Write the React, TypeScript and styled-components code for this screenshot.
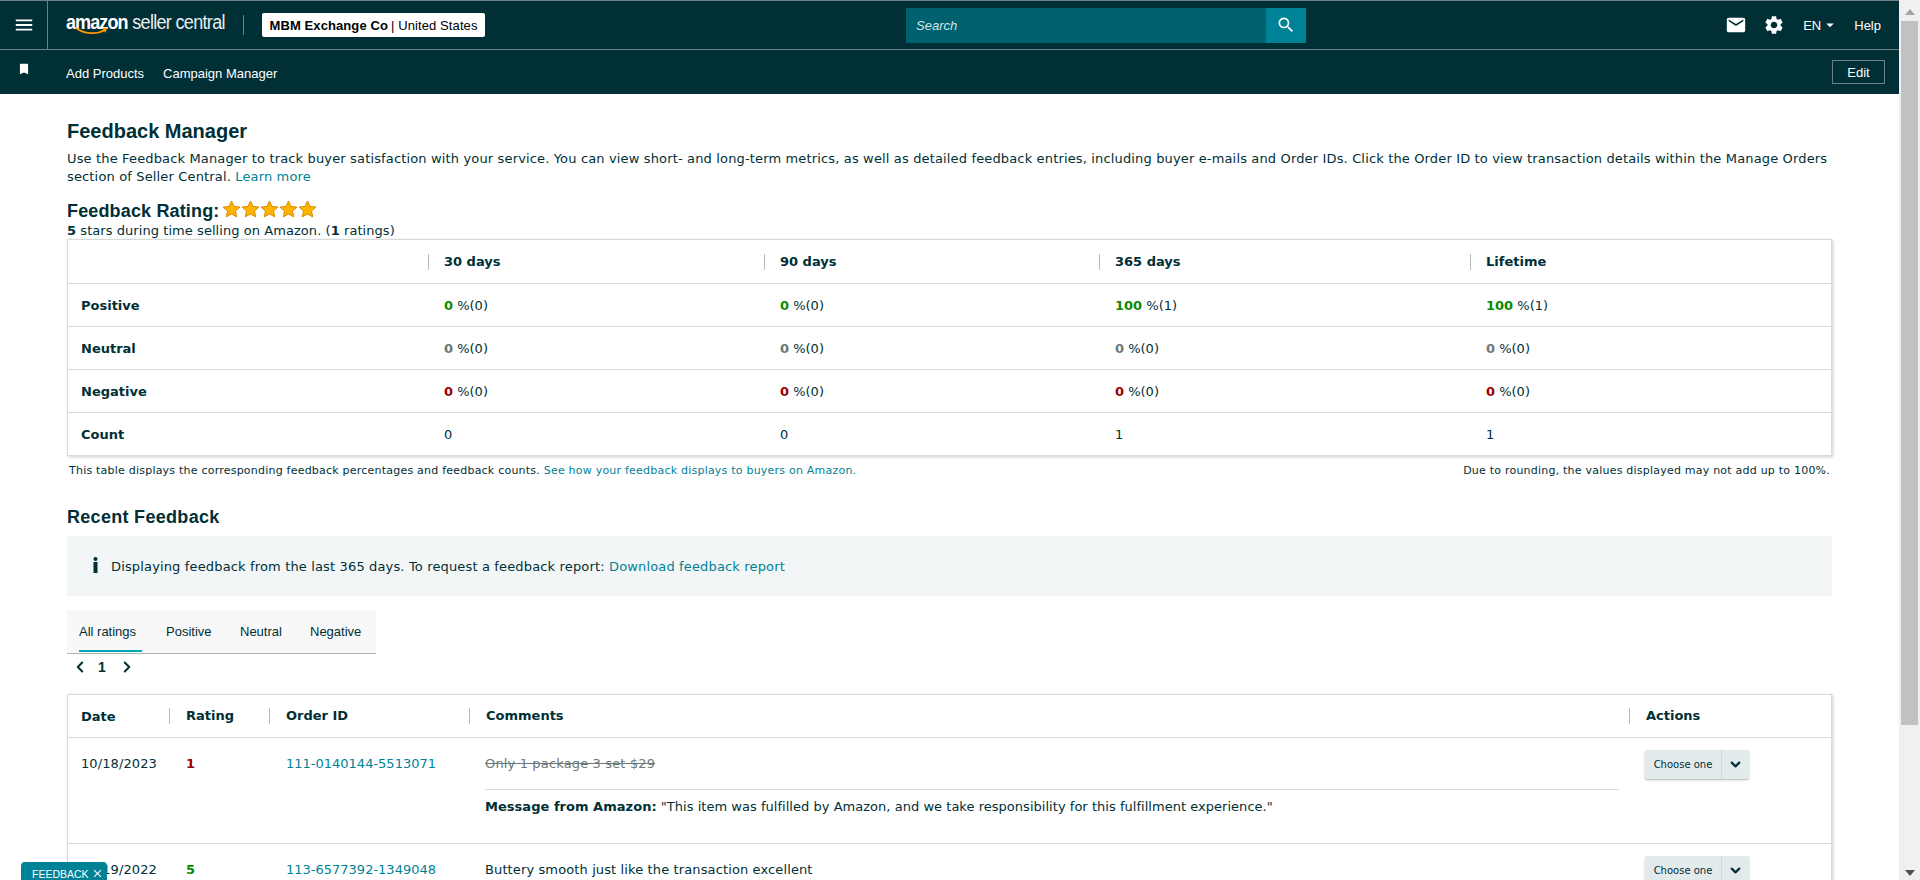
import React from "react";
import styled, { createGlobalStyle } from "styled-components";
import { MdMenu, MdEmail, MdSettings, MdSearch, MdBookmark, MdClose, MdArrowDropDown } from "react-icons/md";
import { ChevronLeft, ChevronRight, ChevronDown } from "lucide-react";

const Global = createGlobalStyle`
  html, body { margin: 0; padding: 0; height: 880px; overflow: hidden; background: #fff; }
  * { box-sizing: border-box; }
  body { font-family: "DejaVu Sans", Verdana, sans-serif; font-size: 11px; color: #002f36; }
`;
const Page = styled.div`display: flex; height: 880px; width: 1920px; overflow: hidden; position: relative;`;
const Main = styled.main`width: 1899px; height: 880px; overflow: hidden; flex: none;`;
const ScrollBar = styled.aside`width: 21px; height: 880px; background: #f0f0f0; display: flex; flex-direction: column; align-items: center; justify-content: space-between; padding: 9px 0 4px;`;
const ScrollThumb = styled.div`width: 17px; height: 704px; background: #c1c1c1; margin: 6px 0 auto 0;`;
const Arrow = styled.div<{ $up?: boolean }>`
  width: 0; height: 0; border-left: 5px solid transparent; border-right: 5px solid transparent;
  ${(p) => (p.$up ? "border-bottom: 6px solid #a3a3a3;" : "border-top: 6px solid #505050;")}
`;
const TopBar = styled.header`height: 50px; background: #002f36; border-top: 1px solid #6c8287; border-bottom: 1px solid #6c8287; display: flex; align-items: center; color: #fff;`;
const MenuCell = styled.div`width: 48px; height: 48px; border-right: 1px solid #6c8287; display: flex; align-items: center; justify-content: center; font-size: 22px;`;
const Logo = styled.div`position: relative; margin-left: 18px; width: 160px; height: 30px; white-space: nowrap; font-family: "Liberation Sans", Arial, sans-serif; line-height: 24px;`;
const LogoWords = styled.div`display: flex; gap: 5px; transform: scaleX(0.925); transform-origin: left center;`;
const LogoAmazon = styled.span`font-size: 19.5px; font-weight: 700; letter-spacing: -1px;`;
const LogoCentral = styled.span`font-size: 19.5px; font-weight: 400; letter-spacing: -0.75px; color: #e8eded;`;
const LogoSmile = styled.svg`position: absolute; left: 9px; top: 17px;`;
const VSep = styled.div`width: 1px; height: 20px; background: #6c8287; margin-left: 17px;`;
const Badge = styled.div`margin-left: 18px; width: 223px; height: 24px; background: #fff; border-radius: 2px; color: #000; font-family: "Liberation Sans", Arial, sans-serif; font-size: 13px; display: flex; align-items: center; justify-content: center; white-space: nowrap; letter-spacing: 0.1px; b { font-weight: 700; } span { margin-left: 3px; }`;
const SearchWrap = styled.div`margin-left: 421px; display: flex; height: 35px; width: 400px;`;
const SearchField = styled.div`flex: 1; background: #00616e; color: #d5e3e6; font: italic 13px "Liberation Sans", Arial, sans-serif; display: flex; align-items: center; padding-left: 10px;`;
const SearchBtn = styled.div`width: 40px; background: #008296; display: flex; align-items: center; justify-content: center; font-size: 20px;`;
const TopRight = styled.div`margin-left: auto; display: flex; align-items: center; padding-right: 18px; font: 13px "Liberation Sans", Arial, sans-serif;`;
const TopIcon = styled.span<{ $ml: number }>`display: flex; font-size: 22px; margin-left: ${(p) => p.$ml}px;`;
const Lang = styled.span`display: flex; align-items: center; margin-left: 18px;`;
const Help = styled.span`margin-left: 15px;`;
const SubBar = styled.nav`height: 44px; background: #002f36; display: flex; align-items: center; color: #fff; font: 13px "Liberation Sans", Arial, sans-serif; padding-right: 14px;`;
const BookmarkCell = styled.span`width: 48px; display: flex; justify-content: center; font-size: 14px; margin-top: -6px;`;
const SubLink = styled.span<{ $ml: number }>`margin-left: ${(p) => p.$ml}px; margin-top: 2px;`;
const EditBtn = styled.span`margin-left: auto; width: 53px; height: 24px; border: 1px solid #6c8287; display: flex; align-items: center; justify-content: center;`;

const Content = styled.div`padding: 25px 67px 0 67px;`;
const Title = styled.h1`margin: 0; font: 700 20px/24px "Liberation Sans", Arial, sans-serif;`;
const Para = styled.p`margin: 7px 0 0; font-size: 13px; line-height: 18px; letter-spacing: 0.15px;`;
const Link = styled.a`color: #008296; text-decoration: none;`;
const RatingHead = styled.div`margin-top: 13px; display: flex; align-items: center; gap: 3px; height: 24px;`;
const SubTitle = styled.h2`margin: 0; font: 700 18px/24px "Liberation Sans", Arial, sans-serif; letter-spacing: 0.15px;`;
const Stars = styled.span`display: flex; margin-top: -4px;`;
const Small = styled.div`font-size: 13px; line-height: 14px; margin-top: 1px; letter-spacing: 0.06px;`;
const Card = styled.div`margin-top: 1px; border: 1px solid #d5dbdb; box-shadow: 1px 1px 3px rgba(0,0,0,.2); background: #fff;`;
const StatRow = styled.div<{ $head?: boolean }>`display: grid; grid-template-columns: 360px 336px 335px 371px 1fr; height: 43px; align-items: center; font-size: 13px; ${(p) => !p.$head && "border-top: 1px solid #d5dbdb;"}`;
const RowLabel = styled.div`padding-left: 13px; font-weight: 700; font-size: 13px;`;
const HeadCell = styled.div`font-weight: 700; font-size: 13px; border-left: 1px solid #b3bcbc; line-height: 16px; padding-left: 15px; white-space: nowrap;`;
const EmptyHead = styled.div``;
const StatCell = styled.div`padding-left: 16px;`;
const Num = styled.b<{ $c: string }>`color: ${(p) => p.$c};`;
const NoteRow = styled.div`display: flex; justify-content: space-between; font-size: 11px; line-height: 14px; padding: 8px 2px 0; letter-spacing: 0.22px;`;
const RecentTitle = styled(SubTitle)`margin-top: 27px; letter-spacing: 0.3px;`;
const InfoBox = styled.div`margin-top: 7px; height: 60px; background: #f3f6f6; display: flex; align-items: center; padding-left: 26px; font-size: 13px; letter-spacing: 0.15px;`;
const InfoI = styled.svg`margin-right: 13px; margin-top: -3px;`;
const Tabs = styled.div`margin-top: 14px; width: 309px; height: 44px; background: #f8f8f8; border-bottom: 1px solid #aab7b8; display: flex; font: 13px "Liberation Sans", Arial, sans-serif; padding-left: 12px;`;
const Tab = styled.div<{ $w: number; $on?: boolean }>`width: ${(p) => p.$w}px; position: relative; line-height: 43px; ${(p) => p.$on && `&::after { content: ""; position: absolute; left: 0; bottom: 1px; width: 63px; height: 2px; background: #00a8b8; }`}`;
const Pager = styled.div`height: 24px; display: flex; align-items: center; padding: 2px 0 0 4px; font: 700 14px "Liberation Sans", Arial, sans-serif;`;
const PagerNum = styled.span`margin: 0 12px 0 9px;`;
const FeedTable = styled(Card)`margin-top: 16px;`;
const FeedRow = styled.div<{ $head?: boolean }>`display: grid; grid-template-columns: 101px 100px 200px 1160px 1fr; font-size: 13px; ${(p) => p.$head ? "height: 42px; align-items: center;" : "border-top: 1px solid #d5dbdb; height: 106px; align-content: start;"}`;
const FeedDate = styled.div`padding: 17px 0 0 13px; line-height: 18px; white-space: nowrap; letter-spacing: 0.1px;`;
const FeedFirstHead = styled.div`padding-left: 13px; font-weight: 700;`;
const FeedHead = styled(HeadCell)`padding-left: 16px;`;
const FeedCell = styled.div`padding: 17px 0 0 17px; line-height: 18px; white-space: nowrap;`;
const Comment = styled.div`padding: 17px 0 0 16px; line-height: 18px; letter-spacing: 0.03px;`;
const Struck = styled.div`text-decoration: line-through; color: #6c7778; letter-spacing: 0.15px;`;
const PlainComment = styled.span`letter-spacing: 0.12px;`;
const Rule = styled.div`height: 1px; background: #d5dbdb; margin: 16px 10px 8px 0;`;
const ActionCell = styled.div`padding: 12px 0 0 16px;`;
const Choose = styled.div`width: 104px; height: 29px; background: #e3eaeb; border-radius: 2px; box-shadow: 0 1px 2px rgba(0,0,0,.3); display: flex;`;
const ChooseLabel = styled.span`width: 77px; display: flex; align-items: center; justify-content: center; border-right: 1px solid #cfd8d9; font: 10px "DejaVu Sans", sans-serif;`;
const ChooseArrow = styled.span`flex: 1; display: flex; align-items: center; justify-content: center;`;
const FeedbackTab = styled.div`position: absolute; left: 21px; top: 862px; width: 86px; height: 18px; background: #008296; border-radius: 4px 4px 0 0; color: #fff; font: 10.5px "Liberation Sans", Arial, sans-serif; display: flex; align-items: center; padding: 5px 0 0 11px; gap: 2px;`;

const Star = () => (
  <svg width="19" height="18" viewBox="0 0 19 18">
    <path d="M9.5 1l2.5 5.4 5.9.7-4.4 4 1.2 5.8-5.2-3-5.2 3 1.2-5.8-4.4-4 5.9-.7z" fill="#ffb400" stroke="#d98a00" strokeWidth="1" />
  </svg>
);

const pct = (n: number | string, c: string, k: number | string) => (<><Num $c={c}>{n}</Num> %({k})</>);
const GREEN = "#0a8a00", RED = "#a00000", GREY = "#6c7778";

const Choice = () => (
  <Choose><ChooseLabel>Choose one</ChooseLabel><ChooseArrow><ChevronDown size={15} strokeWidth={3.5} /></ChooseArrow></Choose>
);

export default function App() {
  return (
    <Page>
      <Global />
      <Main>
        <TopBar>
          <MenuCell><MdMenu /></MenuCell>
          <Logo>
            <LogoWords><LogoAmazon>amazon</LogoAmazon><LogoCentral>seller central</LogoCentral></LogoWords>
            <LogoSmile width="34" height="10" viewBox="0 0 34 10">
              <path d="M1 1c8 6 20 7 29 2" fill="none" stroke="#f90" strokeWidth="1.8" />
              <path d="M27 1l5 0-1.5 5z" fill="#f90" />
            </LogoSmile>
          </Logo>
          <VSep />
          <Badge><b>MBM Exchange Co</b><span>| United States</span></Badge>
          <SearchWrap>
            <SearchField>Search</SearchField>
            <SearchBtn><MdSearch /></SearchBtn>
          </SearchWrap>
          <TopRight>
            <TopIcon $ml={0}><MdEmail /></TopIcon>
            <TopIcon $ml={16}><MdSettings /></TopIcon>
            <Lang>EN<MdArrowDropDown size={18} /></Lang>
            <Help>Help</Help>
          </TopRight>
        </TopBar>
        <SubBar>
          <BookmarkCell><MdBookmark /></BookmarkCell>
          <SubLink $ml={18}>Add Products</SubLink>
          <SubLink $ml={19}>Campaign Manager</SubLink>
          <EditBtn>Edit</EditBtn>
        </SubBar>
        <Content>
          <Title>Feedback Manager</Title>
          <Para>Use the Feedback Manager to track buyer satisfaction with your service. You can view short- and long-term metrics, as well as detailed feedback entries, including buyer e-mails and Order IDs. Click the Order ID to view transaction details within the Manage Orders section of Seller Central. <Link>Learn more</Link></Para>
          <RatingHead>
            <SubTitle>Feedback Rating:</SubTitle>
            <Stars><Star /><Star /><Star /><Star /><Star /></Stars>
          </RatingHead>
          <Small><b>5</b> stars during time selling on Amazon. (<b>1</b> ratings)</Small>
          <Card>
            <StatRow $head>
              <EmptyHead />
              <HeadCell>30 days</HeadCell><HeadCell>90 days</HeadCell><HeadCell>365 days</HeadCell><HeadCell>Lifetime</HeadCell>
            </StatRow>
            <StatRow>
              <RowLabel>Positive</RowLabel>
              <StatCell>{pct(0, GREEN, 0)}</StatCell><StatCell>{pct(0, GREEN, 0)}</StatCell><StatCell>{pct(100, GREEN, 1)}</StatCell><StatCell>{pct(100, GREEN, 1)}</StatCell>
            </StatRow>
            <StatRow>
              <RowLabel>Neutral</RowLabel>
              <StatCell>{pct(0, GREY, 0)}</StatCell><StatCell>{pct(0, GREY, 0)}</StatCell><StatCell>{pct(0, GREY, 0)}</StatCell><StatCell>{pct(0, GREY, 0)}</StatCell>
            </StatRow>
            <StatRow>
              <RowLabel>Negative</RowLabel>
              <StatCell>{pct(0, RED, 0)}</StatCell><StatCell>{pct(0, RED, 0)}</StatCell><StatCell>{pct(0, RED, 0)}</StatCell><StatCell>{pct(0, RED, 0)}</StatCell>
            </StatRow>
            <StatRow>
              <RowLabel>Count</RowLabel>
              <StatCell>0</StatCell><StatCell>0</StatCell><StatCell>1</StatCell><StatCell>1</StatCell>
            </StatRow>
          </Card>
          <NoteRow>
            <span>This table displays the corresponding feedback percentages and feedback counts. <Link>See how your feedback displays to buyers on Amazon.</Link></span>
            <span>Due to rounding, the values displayed may not add up to 100%.</span>
          </NoteRow>
          <RecentTitle>Recent Feedback</RecentTitle>
          <InfoBox>
            <InfoI width="5" height="16" viewBox="0 0 5 16"><circle cx="2.5" cy="2" r="2" fill="#002f36" /><rect x="0.5" y="5" width="4" height="11" fill="#002f36" /></InfoI>
            <span>Displaying feedback from the last 365 days. To request a feedback report: <Link>Download feedback report</Link></span>
          </InfoBox>
          <Tabs>
            <Tab $w={87} $on>All ratings</Tab><Tab $w={74}>Positive</Tab><Tab $w={70}>Neutral</Tab><Tab $w={60}>Negative</Tab>
          </Tabs>
          <Pager><ChevronLeft size={18} strokeWidth={2.6} /><PagerNum>1</PagerNum><ChevronRight size={18} strokeWidth={2.6} /></Pager>
          <FeedTable>
            <FeedRow $head>
              <FeedFirstHead>Date</FeedFirstHead>
              <FeedHead>Rating</FeedHead><FeedHead>Order ID</FeedHead><FeedHead>Comments</FeedHead><FeedHead>Actions</FeedHead>
            </FeedRow>
            <FeedRow>
              <FeedDate>10/18/2023</FeedDate>
              <FeedCell><Num $c={RED}>1</Num></FeedCell>
              <FeedCell><Link>111-0140144-5513071</Link></FeedCell>
              <Comment>
                <Struck>Only 1 package 3 set $29</Struck>
                <Rule />
                <div><b>Message from Amazon:</b> "This item was fulfilled by Amazon, and we take responsibility for this fulfillment experience."</div>
              </Comment>
              <ActionCell><Choice /></ActionCell>
            </FeedRow>
            <FeedRow>
              <FeedDate>11/19/2022</FeedDate>
              <FeedCell><Num $c={GREEN}>5</Num></FeedCell>
              <FeedCell><Link>113-6577392-1349048</Link></FeedCell>
              <Comment><PlainComment>Buttery smooth just like the transaction excellent</PlainComment></Comment>
              <ActionCell><Choice /></ActionCell>
            </FeedRow>
          </FeedTable>
        </Content>
      </Main>
      <ScrollBar>
        <Arrow $up />
        <ScrollThumb />
        <Arrow />
      </ScrollBar>
      <FeedbackTab>FEEDBACK<MdClose size={13} /></FeedbackTab>
    </Page>
  );
}
